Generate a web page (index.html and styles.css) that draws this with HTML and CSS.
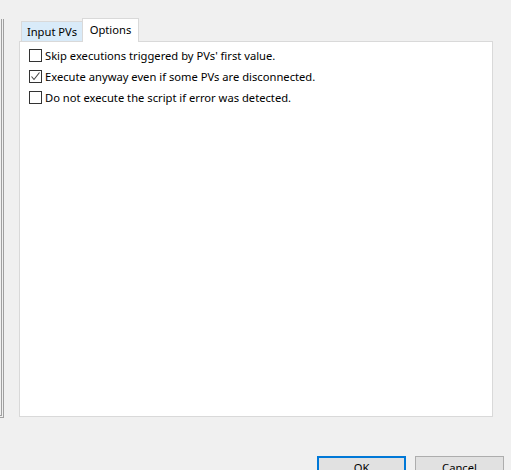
FILE: index.html
```html
<!DOCTYPE html>
<html lang="en">
<head>
    <meta charset="UTF-8">
    <title>Script Options</title>
    <link rel="stylesheet" href="styles.css">
</head>
<body>
    <div class="dialog">
        <div class="main">
            <div class="side"></div>
            <div class="tabs">
                <div class="tab-strip">
                    <div class="tab">Input PVs</div>
                    <div class="tab selected">Options</div>
                </div>
                <div class="panel">
                    <label class="option">
                        <span class="box"></span>
                        Skip executions triggered by PVs' first value.
                    </label>
                    <label class="option">
                        <span class="box">
                            <svg width="11" height="11" viewBox="0 0 11 11"><polyline points="1.5,5.5 4,8.5 9.5,1.5" fill="none" stroke="#444" stroke-width="1.1"/></svg>
                        </span>
                        Execute anyway even if some PVs are disconnected.
                    </label>
                    <label class="option">
                        <span class="box"></span>
                        Do not execute the script if error was detected.
                    </label>
                </div>
            </div>
        </div>
        <div class="buttons">
            <button class="btn default">OK</button>
            <button class="btn">Cancel</button>
        </div>
    </div>
</body>
</html>
```

FILE: styles.css
```css
body {
    margin: 0;
    background-color: #f0f0f0;
    font-family: "Noto Sans", "Open Sans", sans-serif;
    font-size: 11.2px;
    color: #000;
}
.dialog {
    width: 511px;
    height: 470px;
    overflow: hidden;
}
.main {
    display: flex;
}
.side {
    width: 3px;
    height: 396px;
    margin-top: 19px;
    border-right: 1px solid #a0a0a0;
    border-bottom: 1px solid #a0a0a0;
    box-shadow: inset -1px -1px 0 #f0f0f0, inset -2px -2px 0 #a0a0a0;
    padding-bottom: 2px;
}
.tabs {
    margin-left: 15px;
    width: 474px;
}
.tab-strip {
    display: flex;
    align-items: flex-end;
    padding-left: 2px;
    height: 23px;
    margin-top: 18px;
    position: relative;
    z-index: 1;
}
.tab {
    width: 60px;
    height: 19px;
    line-height: 19px;
    text-align: center;
    background-color: #d9ebf9;
    border: 1px solid #d9d9d9;
    border-bottom: none;
    border-right: none;
}
.tab.selected {
    width: 55px;
    height: 23px;
    line-height: 21px;
    margin-bottom: -1px;
    background-color: #fff;
    border-right: 1px solid #d9d9d9;
}
.panel {
    background-color: #fff;
    border: 1px solid #d9d9d9;
    padding: 3px 9px;
    box-sizing: border-box;
    height: 376px;
}
.option {
    display: flex;
    align-items: center;
    gap: 3px;
    height: 21px;
    white-space: nowrap;
}
.box {
    width: 11px;
    height: 11px;
    border: 1px solid #333;
    background-color: #fff;
    display: flex;
    align-items: center;
    justify-content: center;
}
.box svg {
    display: block;
}
.buttons {
    display: flex;
    justify-content: flex-end;
    gap: 9px;
    padding-right: 7px;
    margin-top: 38px;
}
.btn {
    width: 89px;
    height: 23px;
    font-family: inherit;
    font-size: 11.2px;
    background-color: #e1e1e1;
    border: 1px solid #adadad;
    padding: 0;
}
.btn.default {
    border: 2px solid #0078d7;
}
```
